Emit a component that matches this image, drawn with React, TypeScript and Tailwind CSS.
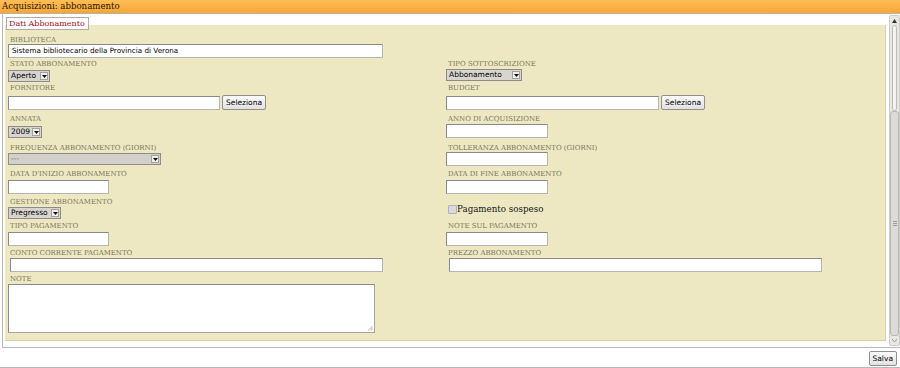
import React from 'react';

const serif = "font-['DejaVu_Serif',serif]";
const sans = "font-['DejaVu_Sans',sans-serif]";

const Label = ({ children }: { children: React.ReactNode }) => (
  <div className={`h-[7px] pl-[2px] ${serif} text-[6.95px] leading-[7px] uppercase whitespace-nowrap text-[#7a7560]`}>
    {children}
  </div>
);

const TextBox = ({ className = '', value = '' }: { className?: string; value?: string }) => (
  <div
    className={`h-[14px] border border-t-[#8a8a8a] border-l-[#8a8a8a] border-r-[#b5b5b5] border-b-[#b5b5b5] bg-white pl-[3px] ${sans} text-[7.2px] leading-[12px] text-black whitespace-nowrap ${className}`}
  >
    {value}
  </div>
);

const Select = ({ value, className = '', disabled = false }: { value: string; className?: string; disabled?: boolean }) => (
  <div
    className={`flex h-[12px] items-stretch border border-[#8e8c87] ${disabled ? 'bg-[#d3d0cb]' : 'bg-[#d8d5d0]'} ${className}`}
  >
    <span
      className={`flex-1 pl-[2px] ${sans} text-[7.5px] leading-[10px] whitespace-nowrap ${disabled ? 'text-[#6f6d68]' : 'text-black'}`}
    >
      {value}
    </span>
    <span className="my-[1px] mr-[1px] flex w-[8px] items-center justify-center border border-[#a3a19c] bg-[#efeeeb]">
      <svg width="5" height="3" viewBox="0 0 5 3">
        <path d="M0 0h5L2.5 3z" fill="#111" />
      </svg>
    </span>
  </div>
);

const Button = ({ children, className = '' }: { children: React.ReactNode; className?: string }) => (
  <div
    className={`flex h-[15px] items-center rounded-[2px] border border-[#8f8f8f] bg-gradient-to-b from-[#fbfbfb] to-[#e1e1e1] px-[3px] ${sans} text-[7.5px] leading-none text-black whitespace-nowrap ${className}`}
  >
    {children}
  </div>
);

const Row = ({ h, left, right }: { h: string; left: React.ReactNode; right?: React.ReactNode }) => (
  <div className={`flex ${h}`}>
    <div className="w-[441px] pl-[3px]">{left}</div>
    <div className="flex-1">{right}</div>
  </div>
);

export default function App() {
  return (
    <div className="flex h-[368px] w-[900px] flex-col overflow-hidden bg-white">
      {/* title bar */}
      <div
        className={`h-[14px] border-b border-[#b9b4aa] bg-gradient-to-b from-[#fdbd55] to-[#f8a636] pl-[2px] ${serif} text-[8.6px] leading-[13px] text-[#1f1403]`}
      >
        Acquisizioni: abbonamento
      </div>

      {/* main box */}
      <div className="ml-[2px] flex h-[334px] border-b border-l border-[#b8b8b8]">
        <div className="flex w-[885px] flex-col pt-[3px]">
          <div
            className={`relative z-10 ml-[3px] h-[13px] w-[83px] border border-[#b0aca0] bg-white pl-[2px] ${serif} text-[8px] leading-[11px] text-[#a3101a]`}
          >
            Dati Abbonamento
          </div>
          <div className="-mt-[5px] ml-[2px] w-[881px] border-b border-r border-[#d8d2a9] bg-[#ede8c2] pt-[12px]">
            <Row
              h="h-[24px]"
              left={
                <>
                  <Label>Biblioteca</Label>
                  <TextBox className="w-[375px]" value="Sistema bibliotecario della Provincia di Verona" />
                </>
              }
            />
            <Row
              h="h-[24px]"
              left={
                <>
                  <Label>Stato abbonamento</Label>
                  <Select value="Aperto" className="mt-[2px] w-[42px]" />
                </>
              }
              right={
                <>
                  <Label>Tipo sottoscrizione</Label>
                  <Select value="Abbonamento" className="mt-[1px] w-[76px]" />
                </>
              }
            />
            <Row
              h="h-[31px]"
              left={
                <>
                  <Label>Fornitore</Label>
                  <div className="mt-[3px] flex items-center gap-[2px]">
                    <TextBox className="w-[212px]" />
                    <Button>Seleziona</Button>
                  </div>
                </>
              }
              right={
                <>
                  <Label>Budget</Label>
                  <div className="mt-[3px] flex items-center gap-[2px]">
                    <TextBox className="w-[213px]" />
                    <Button>Seleziona</Button>
                  </div>
                </>
              }
            />
            <Row
              h="h-[29px]"
              left={
                <>
                  <Label>Annata</Label>
                  <Select value="2009" className="mt-[3px] w-[34px]" />
                </>
              }
              right={
                <>
                  <Label>Anno di acquisizione</Label>
                  <TextBox className="mt-[1px] w-[102px]" />
                </>
              }
            />
            <Row
              h="h-[26px]"
              left={
                <>
                  <Label>Frequenza abbonamento (giorni)</Label>
                  <Select value="---" disabled className="mt-[1px] w-[153px]" />
                </>
              }
              right={
                <>
                  <Label>Tolleranza abbonamento (giorni)</Label>
                  <TextBox className="mt-[0px] w-[102px]" />
                </>
              }
            />
            <Row
              h="h-[28px]"
              left={
                <>
                  <Label>Data d'inizio abbonamento</Label>
                  <TextBox className="mt-[2px] w-[101px]" />
                </>
              }
              right={
                <>
                  <Label>Data di fine abbonamento</Label>
                  <TextBox className="mt-[2px] w-[102px]" />
                </>
              }
            />
            <Row
              h="h-[24px]"
              left={
                <>
                  <Label>Gestione abbonamento</Label>
                  <Select value="Pregresso" className="mt-[1px] w-[53px]" />
                </>
              }
              right={
                <div className="mt-[5px] flex items-center pl-[2px]">
                  <span className="h-[9px] w-[9px] rounded-[1px] border border-[#b3b3b3] bg-[#d9d9d9]" />
                  <span className={`${serif} text-[8.7px] leading-[10px] text-[#151515]`}>Pagamento sospeso</span>
                </div>
              }
            />
            <Row
              h="h-[27px]"
              left={
                <>
                  <Label>Tipo pagamento</Label>
                  <TextBox className="mt-[2px] w-[101px]" />
                </>
              }
              right={
                <>
                  <Label>Note sul pagamento</Label>
                  <TextBox className="mt-[2px] w-[102px]" />
                </>
              }
            />
            <Row
              h="h-[26px]"
              left={
                <>
                  <Label>Conto corrente pagamento</Label>
                  <TextBox className="ml-[2px] mt-[1px] w-[373px]" />
                </>
              }
              right={
                <>
                  <Label>Prezzo abbonamento</Label>
                  <TextBox className="ml-[3px] mt-[1px] w-[373px]" />
                </>
              }
            />
            <Row
              h="h-[64px]"
              left={
                <>
                  <Label>Note</Label>
                  <div className="relative mt-[1px] h-[49px] w-[367px] border border-t-[#8a8a8a] border-l-[#8a8a8a] border-r-[#a5a5a5] border-b-[#a5a5a5] bg-white">
                    <svg className="absolute bottom-[1px] right-[1px]" width="6" height="6" viewBox="0 0 6 6">
                      <path d="M5 1v4M3 3v2M1 5h0M5 5h-4M5 3h-2" stroke="#9a9a9a" strokeWidth="0.8" strokeDasharray="0.8 0.8" />
                    </svg>
                  </div>
                </>
              }
            />
          </div>
        </div>

        {/* scrollbar */}
        <div className="my-[1px] ml-[2px] flex w-[11px] flex-col items-center rounded-[2px] border border-[#cfcdc9] bg-[#e9e7e3]">
          <div className="flex h-[9px] items-center justify-center">
            <svg width="5" height="4" viewBox="0 0 5 4">
              <path d="M0 4L2.5 0L5 4z" fill="#333" />
            </svg>
          </div>
          <div className="h-[86px] w-[5px] rounded-full border border-[#bcbab5] bg-[#f4f3f1]" />
          <div className="flex w-[9px] flex-1 flex-col items-center justify-center gap-[1px] rounded-[3px] border border-[#b9b7b2] bg-[#dddbd7]">
            <span className="h-px w-[4px] bg-[#9d9b96]" />
            <span className="h-px w-[4px] bg-[#9d9b96]" />
            <span className="h-px w-[4px] bg-[#9d9b96]" />
          </div>
          <div className="flex h-[9px] items-center justify-center">
            <svg width="5" height="3" viewBox="0 0 5 3">
              <path d="M0 0L2.5 3L5 0" fill="none" stroke="#888" strokeWidth="0.8" />
            </svg>
          </div>
        </div>
      </div>

      {/* footer */}
      <div className="flex h-[20px] justify-end border-b border-[#b8b8b8] pr-[3px] pt-[3px]">
        <Button className="h-[14px] px-[2px]">Salva</Button>
      </div>
    </div>
  );
}
